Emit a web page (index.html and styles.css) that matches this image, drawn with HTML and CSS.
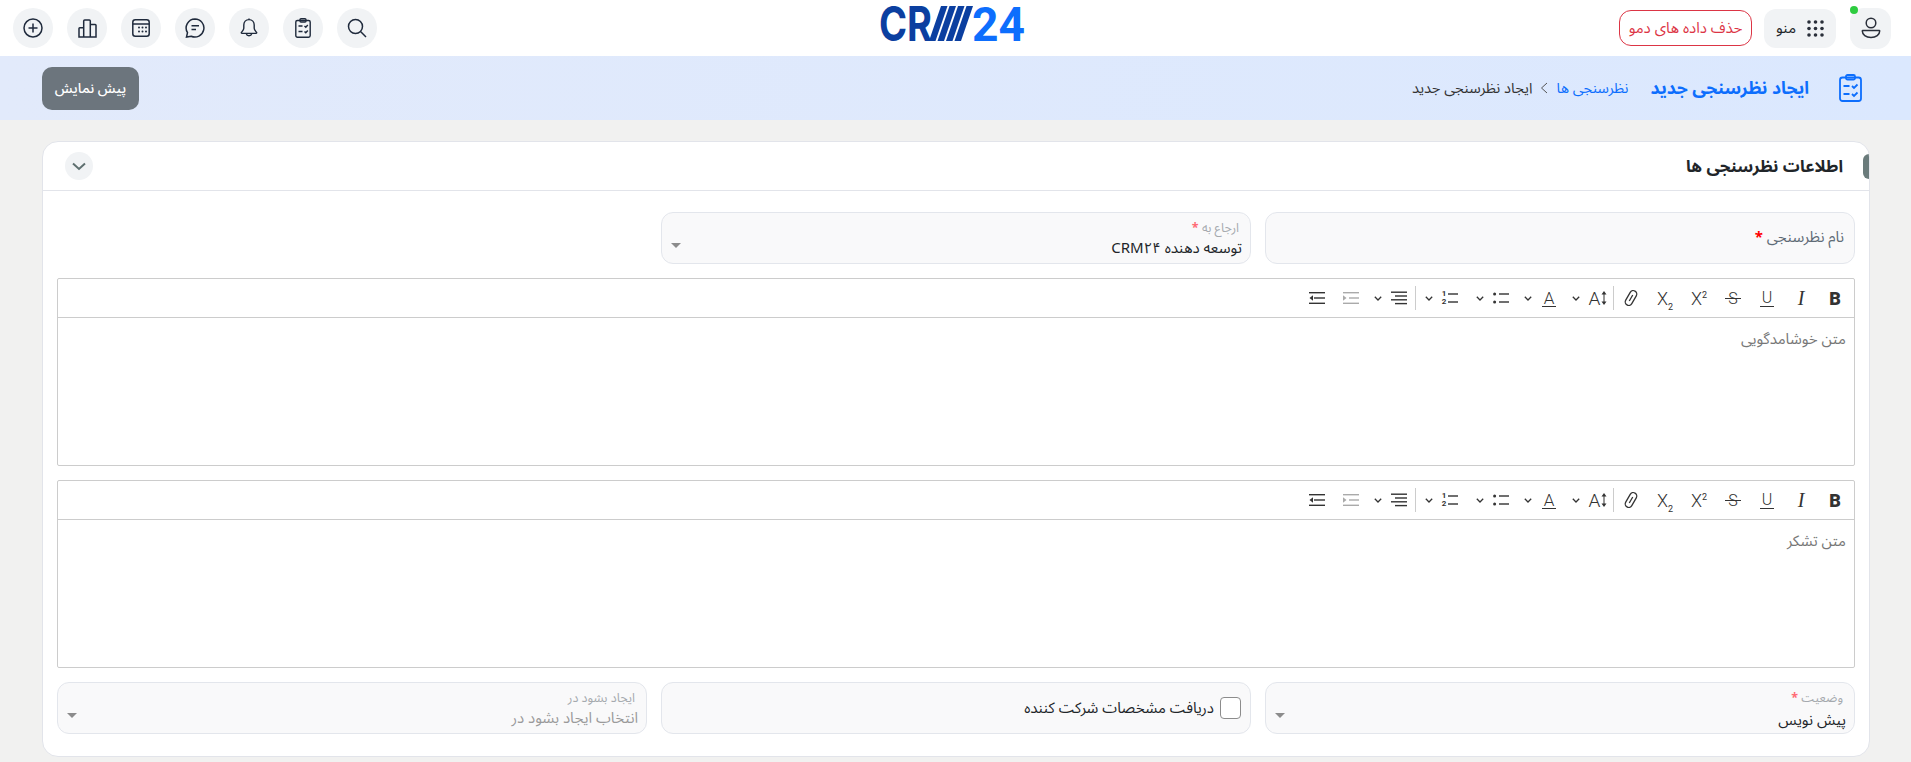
FILE: index.html
```html
<!DOCTYPE html>
<html lang="fa" dir="rtl">
<head>
<meta charset="utf-8">
<title>ایجاد نظرسنجی جدید</title>
<link rel="stylesheet" href="styles.css">
</head>
<body>
<header class="topbar">
  <div class="top-right">
    <button class="avatar">
      <svg width="20" height="22" viewBox="0 0 20 22" fill="none" stroke="#2a2f3a" stroke-width="1.5"><circle cx="10" cy="6" r="4.8"/><path d="M1.800 13.600h16.400c.3 0 .5.2.5.5 0 3.400-3.600 6.400-8.700 6.400s-8.700-3-8.700-6.400c0-.3.200-.5.500-.5z"/></svg>
      <span class="dot"></span>
    </button>
    <button class="menu-btn">
      <svg width="17" height="17" viewBox="0 0 17 17" fill="#2a2f3a"><circle cx="2" cy="2" r="1.800"/><circle cx="8.500" cy="2" r="1.800"/><circle cx="15" cy="2" r="1.800"/><circle cx="2" cy="8.500" r="1.800"/><circle cx="8.500" cy="8.500" r="1.800"/><circle cx="15" cy="8.500" r="1.800"/><circle cx="2" cy="15" r="1.800"/><circle cx="8.500" cy="15" r="1.800"/><circle cx="15" cy="15" r="1.800"/></svg>
      <span>منو</span>
    </button>
    <button class="demo-btn">حذف داده های دمو</button>
  </div>
  <div class="logo" dir="ltr">
    <svg width="146" height="56" viewBox="0 0 146 56">
      <text class="logo-crm" x="0" y="41" textLength="53" lengthAdjust="spacingAndGlyphs">CR</text>
      <polygon fill="#0b3fa0" points="62,6 68.500,6 56.500,41 50,41"/>
      <polygon fill="#0b3fa0" points="70.500,6 77,6 65,41 58.500,41"/>
      <polygon fill="#0b3fa0" points="79,6 85.500,6 73.500,41 67,41"/>
      <polygon fill="#0b3fa0" points="87.500,6 94,6 82,41 75.500,41"/>
      <text class="logo-num" x="93" y="41" textLength="53" lengthAdjust="spacingAndGlyphs">24</text>
    </svg>
  </div>
  <div class="top-left">
    <button class="round"><svg width="20" height="20" viewBox="0 0 20 20" fill="none" stroke="#1f2a3c" stroke-width="1.500"><circle cx="8.500" cy="8.500" r="7"/><path d="M13.800 13.800 19 19"/></svg></button>
    <button class="round"><svg width="16" height="20" viewBox="0 0 16 20" fill="none" stroke="#1f2a3c" stroke-width="1.400"><rect x=".8" y="2.500" width="14.400" height="16.700" rx="1.600"/><rect x="5" y=".8" width="6" height="3.200" rx="1"/><path d="M3.500 8h4M3.500 13.500h4M9.500 8l1.300 1.300 2-2.300M9.500 13.500l1.300 1.300 2-2.300"/></svg></button>
    <button class="round"><svg width="18" height="20" viewBox="0 0 18 20" fill="none" stroke="#1f2a3c" stroke-width="1.400"><path d="M9 1.600c-3.200 0-5.200 2.400-5.200 5.400v3.200c0 1.700-1.500 3-2.400 4.200-.3.400 0 1 .5 1h14.200c.5 0 .8-.6.500-1-.9-1.200-2.400-2.500-2.400-4.200V7c0-3-2-5.400-5.200-5.400z"/><path d="M6.200 15.600a2.900 2.900 0 0 0 5.600 0M9 .6v1"/></svg></button>
    <button class="round"><svg width="20" height="20" viewBox="0 0 20 20" fill="none" stroke="#1f2a3c" stroke-width="1.500"><path d="M10 1a9 9 0 1 1-3.800 17.200L1.500 19l1-4.300A9 9 0 0 1 10 1z"/><path d="M6.500 7.800h7.500M6.500 11.500h4.500"/></svg></button>
    <button class="round"><svg width="18" height="18" viewBox="0 0 18 18" fill="none" stroke="#1f2a3c" stroke-width="1.500"><rect x=".8" y=".8" width="16.400" height="16.400" rx="2.500"/><path d="M1 5h16"/><g fill="#1f2a3c" stroke="none"><circle cx="7" cy="8.500" r="1"/><circle cx="10.500" cy="8.500" r="1"/><circle cx="14" cy="8.500" r="1"/><circle cx="7" cy="12.500" r="1"/><circle cx="10.500" cy="12.500" r="1"/><circle cx="14" cy="12.500" r="1"/></g></svg></button>
    <button class="round"><svg width="19" height="19" viewBox="0 0 19 19" fill="none" stroke="#1f2a3c" stroke-width="1.500"><path d="M1 18V9.500c0-.5.300-.8.800-.8h3.900V18zM5.700 18V2c0-.6.400-1 1-1h4.600c.6 0 1 .4 1 1v16zM12.300 18V5.500h4.900c.5 0 .8.300.8.800V18zM.5 18h18"/></svg></button>
    <button class="round"><svg width="20" height="20" viewBox="0 0 20 20" fill="none" stroke="#1f2a3c" stroke-width="1.500"><circle cx="10" cy="10" r="9"/><path d="M10 5.500v9M5.500 10h9"/></svg></button>
  </div>
</header>

<section class="subbar">
  <svg class="sub-icon" width="23" height="28" viewBox="0 0 23 28" fill="none" stroke="#0d6efd" stroke-width="1.800"><rect x="1" y="3.500" width="21" height="23.500" rx="2.500"/><rect x="7" y="1" width="9" height="4.500" rx="1.500"/><path d="M4.500 12h6M4.500 20h6M13 12l2 2 3.500-3.500M13 20l2 2 3.500-3.500"/></svg>
  <h1 class="sub-title">ایجاد نظرسنجی جدید</h1>
  <nav class="crumbs">
    <a class="crumb-link">نظرسنجی ها</a>
    <svg width="8" height="12" viewBox="0 0 8 12" fill="none" stroke="#555" stroke-width="1"><path d="M7 1 1.500 6 7 11"/></svg>
    <span class="crumb-cur">ایجاد نظرسنجی جدید</span>
  </nav>
  <button class="preview">پیش نمایش</button>
</section>

<main class="page">
  <section class="card">
    <div class="card-head">
      <h2 class="card-title">اطلاعات نظرسنجی ها</h2>
      <button class="collapse"><svg width="14" height="9" viewBox="0 0 14 9" fill="none" stroke="#5f7070" stroke-width="2"><path d="M1 1.500 7 7l6-5.500"/></svg></button>
    </div>
    <div class="card-body">
      <div class="row">
        <div class="field plain"><span class="plain-label">نام نظرسنجی <b class="req">*</b></span></div>
        <div class="field select">
          <span class="small-label">ارجاع به <b class="req soft">*</b></span>
          <span class="value">توسعه دهنده CRM۲۴</span>
          <i class="caret"></i>
        </div>
        <div class="spacer"></div>
      </div>

      <div class="editor">
        <div class="toolbar" dir="rtl">
          <span class="tool t-b" dir="ltr">B</span>
          <span class="tool t-i" dir="ltr">I</span>
          <span class="tool t-u" dir="ltr"><span>U</span></span>
          <span class="tool t-s" dir="ltr"><span>S</span></span>
          <span class="tool t-x" dir="ltr"><span>X<sup>2</sup></span></span>
          <span class="tool t-x" dir="ltr"><span>X<sub>2</sub></span></span>
          <span class="tool"><svg width="18" height="18" viewBox="0 0 18 18" fill="none" stroke="#333" stroke-width="1.300"><g transform="rotate(-60 9 9)"><rect x="1" y="5.500" width="16" height="7" rx="3.500"/><path d="M5.500 9h7"/></g></svg></span>
          <i class="sep"></i>
          <span class="drop w48"><span class="di t-ai" dir="ltr"><span>A</span><svg width="6" height="14" viewBox="0 0 6 14" fill="#333"><path d="M3 0 5.500 3.500h-2v7h2L3 14 .5 10.500h2v-7h-2z"/></svg></span><svg class="chev" width="8" height="5" viewBox="0 0 8 5" fill="none" stroke="#333" stroke-width="1.300"><path d="M.8.800 4 4 7.200.8"/></svg></span>
          <span class="drop w48"><span class="di t-a" dir="ltr"><span>A</span></span><svg class="chev" width="8" height="5" viewBox="0 0 8 5" fill="none" stroke="#333" stroke-width="1.300"><path d="M.8.800 4 4 7.200.8"/></svg></span>
          <span class="drop w51"><span class="di"><svg width="16" height="14" viewBox="0 0 16 14" fill="#333"><circle cx="1.600" cy="3" r="1.500"/><circle cx="1.600" cy="11" r="1.500"/><rect x="6" y="2.300" width="10" height="1.400"/><rect x="6" y="10.300" width="10" height="1.400"/></svg></span><svg class="chev" width="8" height="5" viewBox="0 0 8 5" fill="none" stroke="#333" stroke-width="1.300"><path d="M.8.800 4 4 7.200.8"/></svg></span>
          <span class="drop w50"><span class="di nums" dir="ltr"><span class="numcol"><span>1</span><span>2</span></span><svg width="10" height="14" viewBox="0 0 10 14" fill="#333"><rect y="2.300" width="10" height="1.400"/><rect y="10.300" width="10" height="1.400"/></svg></span><svg class="chev" width="8" height="5" viewBox="0 0 8 5" fill="none" stroke="#333" stroke-width="1.300"><path d="M.8.800 4 4 7.200.8"/></svg></span>
          <i class="sep"></i>
          <span class="drop w47"><span class="di"><svg width="16" height="14" viewBox="0 0 16 14" fill="#333"><rect y=".5" width="16" height="1.400"/><rect x="4" y="4.300" width="12" height="1.400"/><rect y="8.100" width="16" height="1.400"/><rect x="4" y="11.900" width="12" height="1.400"/></svg></span><svg class="chev" width="8" height="5" viewBox="0 0 8 5" fill="none" stroke="#333" stroke-width="1.300"><path d="M.8.800 4 4 7.200.8"/></svg></span>
          <span class="tool"><svg width="16" height="14" viewBox="0 0 16 14" fill="#aaa"><rect y="1" width="16" height="1.400"/><rect x="6" y="6.300" width="10" height="1.400"/><rect y="11.600" width="16" height="1.400"/><path d="M0 4.300 3.500 7 0 9.700z"/></svg></span>
          <span class="tool"><svg width="16" height="14" viewBox="0 0 16 14" fill="#333"><rect y="1" width="16" height="1.400"/><rect x="5" y="6.300" width="11" height="1.400"/><rect y="11.600" width="16" height="1.400"/><path d="M4 4.300.5 7 4 9.700z"/></svg></span>
        </div>
        <div class="editor-body">متن خوشامدگویی</div>
      </div>

      <div class="editor">
        <div class="toolbar" dir="rtl">
          <span class="tool t-b" dir="ltr">B</span>
          <span class="tool t-i" dir="ltr">I</span>
          <span class="tool t-u" dir="ltr"><span>U</span></span>
          <span class="tool t-s" dir="ltr"><span>S</span></span>
          <span class="tool t-x" dir="ltr"><span>X<sup>2</sup></span></span>
          <span class="tool t-x" dir="ltr"><span>X<sub>2</sub></span></span>
          <span class="tool"><svg width="18" height="18" viewBox="0 0 18 18" fill="none" stroke="#333" stroke-width="1.300"><g transform="rotate(-60 9 9)"><rect x="1" y="5.500" width="16" height="7" rx="3.500"/><path d="M5.500 9h7"/></g></svg></span>
          <i class="sep"></i>
          <span class="drop w48"><span class="di t-ai" dir="ltr"><span>A</span><svg width="6" height="14" viewBox="0 0 6 14" fill="#333"><path d="M3 0 5.500 3.500h-2v7h2L3 14 .5 10.500h2v-7h-2z"/></svg></span><svg class="chev" width="8" height="5" viewBox="0 0 8 5" fill="none" stroke="#333" stroke-width="1.300"><path d="M.8.800 4 4 7.200.8"/></svg></span>
          <span class="drop w48"><span class="di t-a" dir="ltr"><span>A</span></span><svg class="chev" width="8" height="5" viewBox="0 0 8 5" fill="none" stroke="#333" stroke-width="1.300"><path d="M.8.800 4 4 7.200.8"/></svg></span>
          <span class="drop w51"><span class="di"><svg width="16" height="14" viewBox="0 0 16 14" fill="#333"><circle cx="1.600" cy="3" r="1.500"/><circle cx="1.600" cy="11" r="1.500"/><rect x="6" y="2.300" width="10" height="1.400"/><rect x="6" y="10.300" width="10" height="1.400"/></svg></span><svg class="chev" width="8" height="5" viewBox="0 0 8 5" fill="none" stroke="#333" stroke-width="1.300"><path d="M.8.800 4 4 7.200.8"/></svg></span>
          <span class="drop w50"><span class="di nums" dir="ltr"><span class="numcol"><span>1</span><span>2</span></span><svg width="10" height="14" viewBox="0 0 10 14" fill="#333"><rect y="2.300" width="10" height="1.400"/><rect y="10.300" width="10" height="1.400"/></svg></span><svg class="chev" width="8" height="5" viewBox="0 0 8 5" fill="none" stroke="#333" stroke-width="1.300"><path d="M.8.800 4 4 7.200.8"/></svg></span>
          <i class="sep"></i>
          <span class="drop w47"><span class="di"><svg width="16" height="14" viewBox="0 0 16 14" fill="#333"><rect y=".5" width="16" height="1.400"/><rect x="4" y="4.300" width="12" height="1.400"/><rect y="8.100" width="16" height="1.400"/><rect x="4" y="11.900" width="12" height="1.400"/></svg></span><svg class="chev" width="8" height="5" viewBox="0 0 8 5" fill="none" stroke="#333" stroke-width="1.300"><path d="M.8.800 4 4 7.200.8"/></svg></span>
          <span class="tool"><svg width="16" height="14" viewBox="0 0 16 14" fill="#aaa"><rect y="1" width="16" height="1.400"/><rect x="6" y="6.300" width="10" height="1.400"/><rect y="11.600" width="16" height="1.400"/><path d="M0 4.300 3.500 7 0 9.700z"/></svg></span>
          <span class="tool"><svg width="16" height="14" viewBox="0 0 16 14" fill="#333"><rect y="1" width="16" height="1.400"/><rect x="5" y="6.300" width="11" height="1.400"/><rect y="11.600" width="16" height="1.400"/><path d="M4 4.300.5 7 4 9.700z"/></svg></span>
        </div>
        <div class="editor-body">متن تشکر</div>
      </div>

      <div class="row">
        <div class="field select">
          <span class="small-label">وضعیت <b class="req soft">*</b></span>
          <span class="value low">پیش نویس</span>
          <i class="caret"></i>
        </div>
        <label class="field check">
          <span class="box"></span>
          <span class="check-text">دریافت مشخصات شرکت کننده</span>
        </label>
        <div class="field select">
          <span class="small-label">ایجاد بشود در</span>
          <span class="value muted">انتخاب ایجاد بشود در</span>
          <i class="caret"></i>
        </div>
      </div>
    </div>
  </section>
</main>
</body>
</html>
```
FILE: styles.css
```css
* { box-sizing: border-box; }
html, body { margin: 0; padding: 0; }
body {
  width: 1911px;
  height: 762px;
  overflow: hidden;
  background: #f1f1f0;
  font-family: "Noto Sans Arabic", "Vazirmatn", Roboto, "DejaVu Sans", sans-serif;
  font-size: 14px;
  color: #212529;
}
button { font: inherit; border: 0; padding: 0; cursor: pointer; }
h1, h2 { margin: 0; }

.topbar {
  height: 56px;
  background: #fff;
  display: grid;
  grid-template-columns: 1fr auto 1fr;
  align-items: center;
  padding: 0 20px 0 13px;
}
.top-right { display: flex; align-items: center; }
.top-left { display: flex; gap: 14px; justify-self: end; }
.round {
  width: 40px; height: 40px; border-radius: 50%;
  background: #f1f3f5;
  display: flex; align-items: center; justify-content: center;
}
.avatar {
  position: relative;
  width: 41px; height: 41px; border-radius: 14px;
  background: #f1f3f5;
  display: flex; align-items: center; justify-content: center;
  margin-left: 14px;
}
.dot {
  position: absolute; top: -2px; left: 0;
  width: 8px; height: 8px; border-radius: 50%;
  background: #2ecc40;
}
.menu-btn {
  width: 72px; height: 39px; border-radius: 12px;
  background: #f1f3f5; color: #212529;
  font-size: 15px;
  display: flex; align-items: center; justify-content: center; gap: 11px;
  margin-left: 12px;
}
.demo-btn {
  width: 133px; height: 36px; border-radius: 12px;
  background: #fff; color: #dc3545;
  border: 1px solid #dc3545;
  font-size: 15px;
  display: flex; align-items: center; justify-content: center;
}
.logo { display: flex; height: 56px; }
.logo-crm { font: 700 48px "Inter", sans-serif; fill: #0b3fa0; }
.logo-num { font: 700 49px "Roboto", sans-serif; fill: #0d6efd; }

.subbar {
  height: 64px;
  background: linear-gradient(to left, #dbe8fe, #e2eafb);
  display: flex; align-items: center;
  padding: 0 49px 0 42px;
}
.sub-icon { margin-left: 30px; flex: none; }
.sub-title { font-size: 17.500px; font-weight: 700; color: #0d6efd; margin-left: 22px; }
.crumbs { display: flex; align-items: center; gap: 8px; }
.crumb-link { color: #0d6efd; font-size: 14.500px; }
.crumb-cur { color: #333; font-size: 14.600px; }
.preview {
  margin-right: auto;
  width: 97px; height: 43px; border-radius: 10px;
  background: #6c757d; color: #fff;
  font-size: 14px; font-weight: 500;
}

.page { padding: 21px 41px 0 42px; }
.card {
  height: 616px;
  background: #fff;
  border: 1px solid #e2e4ea;
  border-radius: 16px;
  overflow: hidden;
}
.card-head {
  position: relative;
  height: 49px;
  border-bottom: 1px solid #e2e4ea;
  display: flex; align-items: center; justify-content: space-between;
  padding: 0 26px 0 22px;
}
.card-head::before {
  content: "";
  position: absolute; top: 12px; right: 0;
  width: 6px; height: 25px;
  background: #6a7b7b;
  border-radius: 6px 0 0 6px;
}
.card-title { font-size: 16.800px; font-weight: 700; color: #212529; }
.collapse {
  width: 28px; height: 28px; border-radius: 50%;
  background: #f1f3f5;
  display: flex; align-items: center; justify-content: center;
}
.card-body {
  padding: 21px 14px 0 14px;
  display: flex; flex-direction: column; gap: 14px;
}
.row { display: grid; grid-template-columns: repeat(3, 1fr); gap: 14px; }
.field {
  position: relative;
  height: 52px;
  background: #f9f9fa;
  border: 1px solid #e3e6ec;
  border-radius: 12px;
}
.plain { display: flex; align-items: center; padding: 0 10px 2px; }
.plain-label { color: #5f6b76; font-size: 15px; }
.req { color: #f00; font-weight: 700; }
.req.soft { color: #ff6b75; }
.select { display: flex; flex-direction: column; padding: 7px 8px 0; }
.small-label { font-size: 12.500px; color: #a5a9ae; line-height: 16px; padding-right: 3px; }
.value { font-size: 15px; color: #212529; line-height: 20px; margin-top: 2px; }
.value.low { margin-top: 4px; }
.value.muted { color: #9a9a9a; }
.caret {
  position: absolute; left: 9px; top: 30px;
  border-top: 5px solid #8c8c8c;
  border-left: 5px solid transparent;
  border-right: 5px solid transparent;
}
.check { display: flex; align-items: center; gap: 6px; padding: 0 9px; }
.box {
  width: 21px; height: 22px; background: #fff;
  border: 1px solid #8c8c8c; border-radius: 4px; flex: none;
}
.check-text { font-size: 15px; color: #212529; }

.editor { height: 188px; border: 1px solid #ccc; border-radius: 2px; background: #fff; }
.toolbar {
  height: 39px;
  border-bottom: 1px solid #ccc;
  display: flex; align-items: center;
  padding-right: 2px;
  color: #333;
  font-family: Roboto, "Liberation Sans", sans-serif;
}
.tool {
  width: 34px; height: 24px; flex: none;
  display: flex; align-items: center; justify-content: center;
  font-size: 18px;
}
.t-b { font-weight: 900; }
.t-i { font-style: italic; font-weight: 400; font-family: "Liberation Serif", serif; font-size: 20px; }
.t-u span, .t-a span { border-bottom: 1.500px solid #333; line-height: 16px; padding: 0 2px; font-weight: 300; font-size: 16px; }
.t-s span { position: relative; padding: 0 2px; font-weight: 300; font-size: 16px; }
.t-s span::after {
  content: "";
  position: absolute; left: -1px; right: -1px; top: 50%;
  height: 1px; background: #333;
}
.t-x { font-size: 18px; font-weight: 300; }
.t-x sup, .t-x sub { font-size: 9px; font-weight: 400; line-height: 0; }
.sep { width: 1px; height: 24px; background: #ccc; flex: none; }
.drop { display: flex; align-items: center; height: 24px; flex: none; }
.w48 { width: 48px; }
.w50 { width: 50px; }
.w51 { width: 51px; }
.w47 { width: 47px; }
.di {
  width: 32px; flex: none;
  display: flex; align-items: center; justify-content: center;
  font-size: 17px;
}
.t-ai { gap: 1px; font-weight: 300; font-size: 19px; padding-left: 2px; }
.t-a span { font-size: 17px; }
.chev { flex: none; margin-right: 1px; }
.nums { gap: 2px; }
.numcol { display: flex; flex-direction: column; font-size: 8px; line-height: 8px; font-weight: 700; }
.editor-body { padding: 5px 8px; font-size: 15px; color: #777; }
```
